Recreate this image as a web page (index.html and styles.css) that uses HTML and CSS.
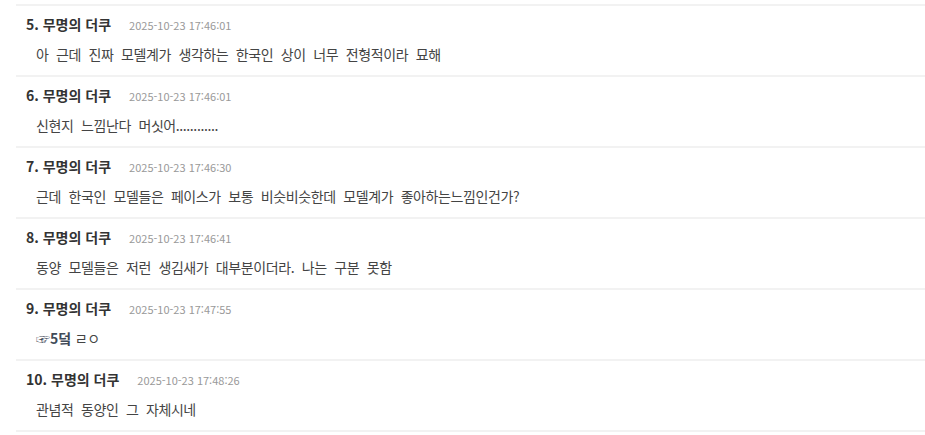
FILE: index.html
```html
<!DOCTYPE html>
<html lang="ko">
<head>
    <meta charset="UTF-8">
    <title>댓글</title>
    <meta name="viewport" content="width=device-width, initial-scale=1.0">
    <link rel="stylesheet" href="styles.css">
</head>
<body>
    <div class="comment-list">
        <div class="comment">
            <div class="comment-head"><strong>5. 무명의 더쿠</strong><span class="date">2025-10-23 17:46:01</span></div>
            <div class="comment-body">아 근데 진짜 모델계가 생각하는 한국인 상이 너무 전형적이라 묘해</div>
        </div>
        <div class="comment">
            <div class="comment-head"><strong>6. 무명의 더쿠</strong><span class="date">2025-10-23 17:46:01</span></div>
            <div class="comment-body">신현지 느낌난다 머싯어............</div>
        </div>
        <div class="comment">
            <div class="comment-head"><strong>7. 무명의 더쿠</strong><span class="date">2025-10-23 17:46:30</span></div>
            <div class="comment-body">근데 한국인 모델들은 페이스가 보통 비슷비슷한데 모델계가 좋아하는느낌인건가?</div>
        </div>
        <div class="comment">
            <div class="comment-head"><strong>8. 무명의 더쿠</strong><span class="date">2025-10-23 17:46:41</span></div>
            <div class="comment-body">동양 모델들은 저런 생김새가 대부분이더라. 나는 구분 못함</div>
        </div>
        <div class="comment">
            <div class="comment-head"><strong>9. 무명의 더쿠</strong><span class="date">2025-10-23 17:47:55</span></div>
            <div class="comment-body short"><a class="reply-ref">☞5덬</a> ㄹㅇ</div>
        </div>
        <div class="comment">
            <div class="comment-head"><strong>10. 무명의 더쿠</strong><span class="date">2025-10-23 17:48:26</span></div>
            <div class="comment-body">관념적 동양인 그 자체시네</div>
        </div>
    </div>
</body>
</html>
```

FILE: styles.css
```css
body {
    margin: 0;
    background: #fff;
    font-family: "Noto Sans CJK KR", "Noto Sans", sans-serif;
    color: #333;
}
.comment-list {
    margin: 4px 0 0 16px;
    border-top: 2px solid #f2f2f2;
}
.comment {
    height: 71px;
    padding: 8px 0 0 10px;
    box-sizing: border-box;
    border-bottom: 2px solid #f2f2f2;
}
.comment-head {
    font-size: 14px;
    line-height: 20px;
    color: #333;
}
.comment-head strong { font-weight: bold; }
.date {
    margin-left: 18px;
    font-size: 11px;
    color: #999;
}
.comment-body {
    margin-top: 9px;
    padding-left: 10px;
    font-size: 14px;
    line-height: 20px;
    letter-spacing: -0.4px;
    word-spacing: 4px;
    color: #444;
}
.comment-body.short { word-spacing: 0; }
.reply-ref {
    font-weight: bold;
    color: #3f4a58;
    letter-spacing: 0;
}
```
